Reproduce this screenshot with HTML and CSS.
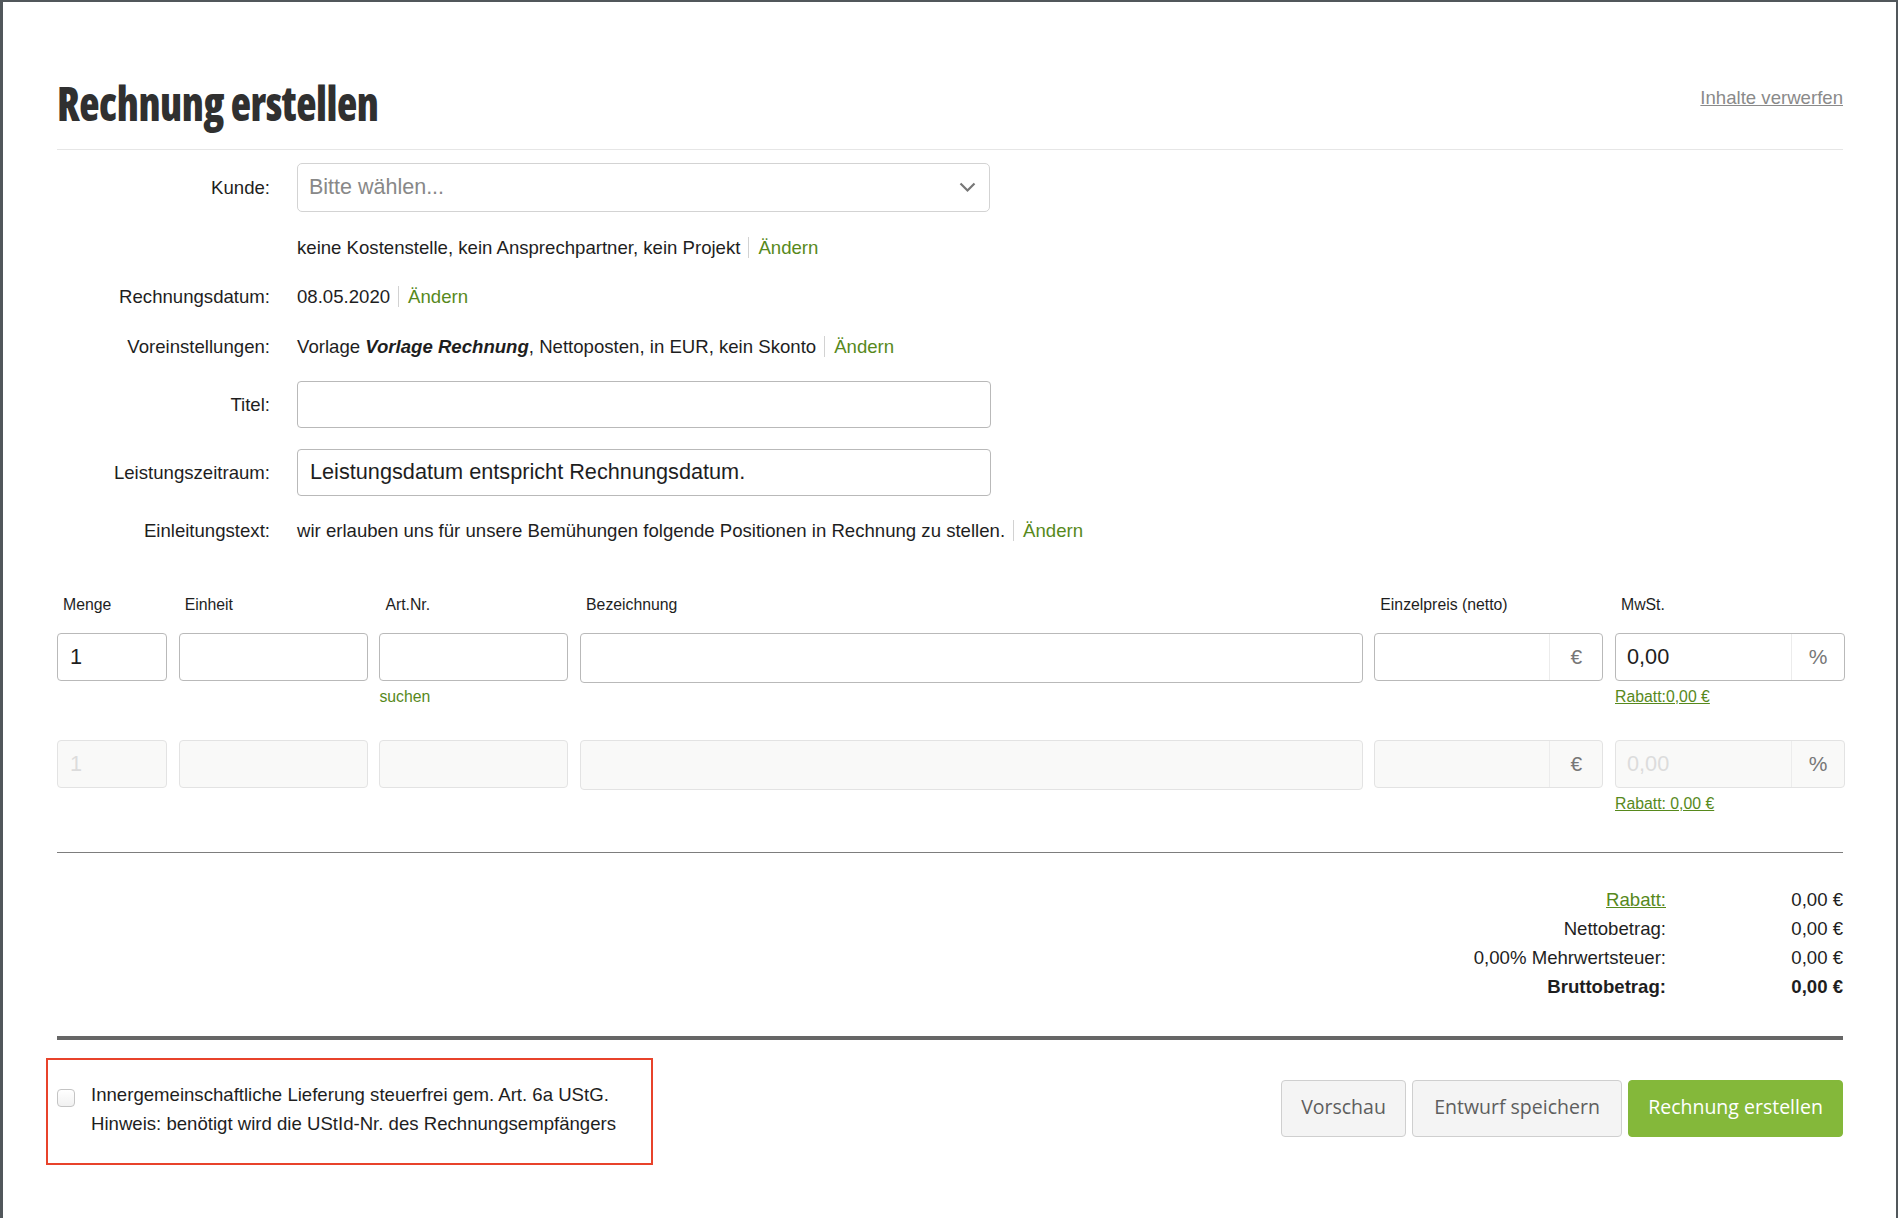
FILE: index.html
```html
<!DOCTYPE html>
<html lang="de">
<head>
<meta charset="utf-8">
<title>Rechnung erstellen</title>
<link rel="stylesheet" href="styles.css">
</head>
<body>
<div class="frame">
  <header class="page-head">
    <h1 class="page-title">Rechnung erstellen</h1>
    <a class="discard">Inhalte verwerfen</a>
  </header>

  <section class="form">
    <div class="row">
      <div class="label">Kunde:</div>
      <div class="select">
        <span>Bitte wählen...</span>
        <svg class="chev" width="17" height="11" viewBox="0 0 17 11"><polyline points="1.5,1.5 8.5,8.5 15.5,1.5" fill="none" stroke="#777" stroke-width="2.2"/></svg>
      </div>
    </div>
    <div class="row">
      <div class="label"></div>
      <div class="value">keine Kostenstelle, kein Ansprechpartner, kein Projekt<span class="sep"></span><a class="link">Ändern</a></div>
    </div>
    <div class="row">
      <div class="label">Rechnungsdatum:</div>
      <div class="value">08.05.2020<span class="sep"></span><a class="link">Ändern</a></div>
    </div>
    <div class="row">
      <div class="label">Voreinstellungen:</div>
      <div class="value"><span>Vorlage&nbsp;<b><i>Vorlage Rechnung</i></b>, Nettoposten, in EUR, kein Skonto</span><span class="sep"></span><a class="link">Ändern</a></div>
    </div>
    <div class="row">
      <div class="label">Titel:</div>
      <input class="text-input" type="text" value="">
    </div>
    <div class="row">
      <div class="label">Leistungszeitraum:</div>
      <input class="text-input" type="text" value="Leistungsdatum entspricht Rechnungsdatum.">
    </div>
    <div class="row">
      <div class="label">Einleitungstext:</div>
      <div class="value">wir erlauben uns für unsere Bemühungen folgende Positionen in Rechnung zu stellen.<span class="sep"></span><a class="link">Ändern</a></div>
    </div>
  </section>

  <section class="items">
    <div class="grid heads">
      <span>Menge</span>
      <span>Einheit</span>
      <span>Art.Nr.</span>
      <span>Bezeichnung</span>
      <span>Einzelpreis (netto)</span>
      <span>MwSt.</span>
    </div>

    <div class="item">
      <div class="grid inputs">
        <input class="in" type="text" value="1">
        <input class="in" type="text" value="">
        <input class="in" type="text" value="">
        <input class="in tall" type="text" value="">
        <div class="group"><input type="text" value=""><span class="addon">€</span></div>
        <div class="group"><input type="text" value="0,00"><span class="addon">%</span></div>
      </div>
      <div class="grid sub">
        <a class="link s-art">suchen</a>
        <a class="link ul s-mwst">Rabatt:0,00 €</a>
      </div>
    </div>

    <div class="item disabled">
      <div class="grid inputs">
        <input class="in" type="text" value="1" disabled>
        <input class="in" type="text" value="" disabled>
        <input class="in" type="text" value="" disabled>
        <input class="in tall" type="text" value="" disabled>
        <div class="group"><input type="text" value="" disabled><span class="addon">€</span></div>
        <div class="group"><input type="text" value="0,00" disabled><span class="addon">%</span></div>
      </div>
      <div class="grid sub">
        <a class="link ul s-mwst">Rabatt: 0,00 €</a>
      </div>
    </div>
  </section>

  <div class="rule"></div>

  <section class="totals">
    <a class="t-l link ul">Rabatt:</a><span class="t-v">0,00 €</span>
    <span class="t-l">Nettobetrag:</span><span class="t-v">0,00 €</span>
    <span class="t-l">0,00% Mehrwertsteuer:</span><span class="t-v">0,00 €</span>
    <span class="t-l bold">Bruttobetrag:</span><span class="t-v bold">0,00 €</span>
  </section>

  <div class="rule-thick"></div>

  <footer class="footer">
    <div class="notice">
      <span class="cb"></span>
      <div class="notice-text">
        <div>Innergemeinschaftliche Lieferung steuerfrei gem. Art. 6a UStG.</div>
        <div>Hinweis: benötigt wird die UStId-Nr. des Rechnungsempfängers</div>
      </div>
    </div>
    <div class="actions">
      <button class="btn b-preview">Vorschau</button>
      <button class="btn b-draft">Entwurf speichern</button>
      <button class="btn primary">Rechnung erstellen</button>
    </div>
  </footer>
</div>
</body>
</html>
```

FILE: styles.css
```css
* { box-sizing: border-box; }
html, body { margin: 0; padding: 0; background: #fff; }
body {
  font-family: "Liberation Sans", Arial, sans-serif;
  font-size: 18.6px;
  color: #1e1e1e;
}
.frame {
  min-height: 1218px;
  border-top: 2px solid #51575b;
  border-left: 3px solid #51575b;
  border-right: 2px solid #51575b;
  padding: 0 53px 0 54px;
}

/* header */
.page-head {
  display: flex;
  justify-content: space-between;
  align-items: flex-start;
  padding-top: 73px;
  padding-bottom: 18px;
  border-bottom: 1px solid #e6e6e6;
}
.page-title {
  margin: 0;
  font-family: "Open Sans", sans-serif;
  font-weight: 800;
  font-stretch: 75%;
  font-size: 47px;
  line-height: 56px;
  color: #303030;
  letter-spacing: -0.5px;
  transform: scaleX(0.89);
  transform-origin: left center;
}
.discard {
  margin-top: 12px;
  color: #8a8a8a;
  text-decoration: underline;
  line-height: 21px;
}

/* form */
.form {
  margin-top: 13px;
  display: flex;
  flex-direction: column;
  gap: 20.5px;
}
.row {
  display: flex;
  align-items: center;
  gap: 27px;
}
.label {
  width: 213px;
  flex: none;
  text-align: right;
  line-height: 29px;
  min-height: 29px;
}
.value {
  display: flex;
  align-items: center;
  line-height: 29px;
  white-space: nowrap;
}
.sep {
  display: inline-block;
  width: 1px;
  height: 21px;
  background: #d2d2d2;
  margin: 0 9px 0 8px;
}
.link { color: #57891c; cursor: pointer; }
.ul { text-decoration: underline; }
.select {
  width: 693px;
  height: 49px;
  border: 1px solid #d3d3d3;
  border-radius: 5px;
  display: flex;
  align-items: center;
  justify-content: space-between;
  padding: 0 13px 0 11px;
  font-size: 21.5px;
  color: #888;
}
.text-input {
  width: 694px;
  height: 47px;
  border: 1px solid #b9b9b9;
  border-radius: 4px;
  padding: 0 12px;
  font-family: "Liberation Sans", Arial, sans-serif;
  font-size: 21.7px;
  color: #1e1e1e;
  background: #fff;
  outline: none;
}

/* line items */
.items {
  margin-top: 48px;
  margin-right: -2px;
}
.grid {
  display: grid;
  grid-template-columns: 110px 189px 189px 1fr 229px 230px;
  column-gap: 11.7px;
}
.heads {
  font-size: 15.8px;
  line-height: 24px;
}
.heads span { padding-left: 6px; }
.inputs {
  margin-top: 16px;
  align-items: start;
}
.in {
  width: 100%;
  height: 48px;
  border: 1px solid #b9b9b9;
  border-radius: 4px;
  padding: 0 12px;
  font-family: "Liberation Sans", Arial, sans-serif;
  font-size: 21.7px;
  color: #1e1e1e;
  background: #fff;
  outline: none;
}
.in.tall { height: 50px; }
.group {
  display: flex;
  height: 48px;
  border: 1px solid #b9b9b9;
  border-radius: 4px;
  overflow: hidden;
  background: #fff;
}
.group input {
  flex: 1;
  min-width: 0;
  border: 0;
  padding: 0 11px;
  font-family: "Liberation Sans", Arial, sans-serif;
  font-size: 21.7px;
  color: #1e1e1e;
  background: transparent;
  outline: none;
}
.addon {
  width: 53px;
  flex: none;
  border-left: 1px solid #ececec;
  display: flex;
  align-items: center;
  justify-content: center;
  color: #777;
  font-size: 21px;
}
.sub {
  margin-top: 2px;
  font-size: 15.8px;
  line-height: 24px;
}
.s-art { grid-column: 3; }
.s-mwst { grid-column: 6; }
.item + .item { margin-top: 31px; }
.disabled .in,
.disabled .group {
  background: #f9f9f8;
  border-color: #e3e3e3;
}
.disabled input { color: #dcdcdc; }

/* totals */
.rule {
  margin-top: 35.5px;
  border-top: 1px solid #7d7d7d;
}
.totals {
  margin-top: 32.5px;
  display: grid;
  grid-template-columns: auto 177px;
  justify-content: end;
  line-height: 29px;
}
.t-l, .t-v { text-align: right; }
.bold { font-weight: 700; }
.rule-thick {
  margin-top: 34.5px;
  border-top: 4px solid #666;
}

/* footer */
.footer {
  margin-top: 18px;
  display: flex;
  justify-content: space-between;
  align-items: flex-start;
}
.notice {
  margin-left: -11px;
  border: 2px solid #e8432b;
  padding: 20px 35px 25px 9px;
  display: flex;
  align-items: flex-start;
  line-height: 29px;
}
.cb {
  width: 18px;
  height: 18px;
  flex: none;
  margin-top: 9px;
  margin-right: 16px;
  border: 1px solid #c4c4c4;
  border-radius: 4px;
  background: linear-gradient(#fff, #f1f1f1);
}
.actions {
  display: flex;
  gap: 6px;
  margin-top: 22px;
}
.btn {
  height: 57px;
  padding: 0 0 3px;
  border: 1px solid #cfcfcf;
  border-radius: 4px;
  background: #f4f4f4;
  color: #5e5e5e;
  font-family: "Open Sans", sans-serif;
  font-size: 19.5px;
  text-align: center;
}
.b-preview { width: 125px; }
.b-draft { width: 210px; }
.btn.primary {
  width: 215px;
  background: #84b83a;
  border-color: #84b83a;
  color: #fff;
}
```
